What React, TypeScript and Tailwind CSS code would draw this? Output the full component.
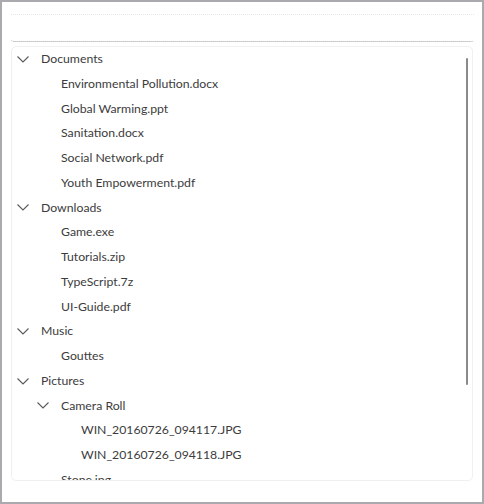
import type { ReactNode } from 'react'

type Node = { label: string; children?: Node[] }

const tree: Node[] = [
  {
    label: 'Documents',
    children: [
      { label: 'Environmental Pollution.docx' },
      { label: 'Global Warming.ppt' },
      { label: 'Sanitation.docx' },
      { label: 'Social Network.pdf' },
      { label: 'Youth Empowerment.pdf' },
    ],
  },
  {
    label: 'Downloads',
    children: [
      { label: 'Game.exe' },
      { label: 'Tutorials.zip' },
      { label: 'TypeScript.7z' },
      { label: 'UI-Guide.pdf' },
    ],
  },
  { label: 'Music', children: [{ label: 'Gouttes' }] },
  {
    label: 'Pictures',
    children: [
      {
        label: 'Camera Roll',
        children: [{ label: 'WIN_20160726_094117.JPG' }, { label: 'WIN_20160726_094118.JPG' }],
      },
      { label: 'Stone.jpg' },
    ],
  },
]

function Chevron() {
  return (
    <svg width="12" height="7" viewBox="0 0 12 7" fill="none" className="shrink-0">
      <path d="M0.5 0.5 L6 6 L11.5 0.5" stroke="#5a5a5a" strokeWidth="1.1" />
    </svg>
  )
}

// Flatten the tree into indented rows.
function rows(nodes: Node[], level: number): ReactNode[] {
  const out: ReactNode[] = []
  for (const n of nodes) {
    out.push(
      <div
        key={`${level}-${n.label}`}
        className="flex h-[24.75px] items-center"
        style={{ paddingLeft: 5 + level * 20 }}
      >
        <span className="flex w-[24px] items-center">{n.children && <Chevron />}</span>
        <span className="whitespace-nowrap">{n.label}</span>
      </div>,
    )
    if (n.children) out.push(...rows(n.children, level + 1))
  }
  return out
}

export default function App() {
  return (
    <div className="h-[504px] w-[484px] overflow-hidden border-2 border-[#a9a9ae] bg-white font-['Lato',sans-serif] text-[12.25px] text-[#3c3c3c]">
      {/* Search box */}
      <div className="ml-[9px] mt-[12px] h-[28px] w-[463px] rounded-b-[3px] border-t border-dotted border-t-[#e6e6e6] border-b border-b-[#9c9c9c]" />

      {/* Tree panel */}
      <div className="relative ml-[9px] mt-[4px] h-[435px] w-[462px] overflow-hidden rounded-[5px] border border-[#f0f0f0]">
        <div>{rows(tree, 0)}</div>
        <div className="absolute right-[4px] top-[11px] h-[327px] w-[2px] rounded-full bg-[#8a8a8a]" />
      </div>
    </div>
  )
}
